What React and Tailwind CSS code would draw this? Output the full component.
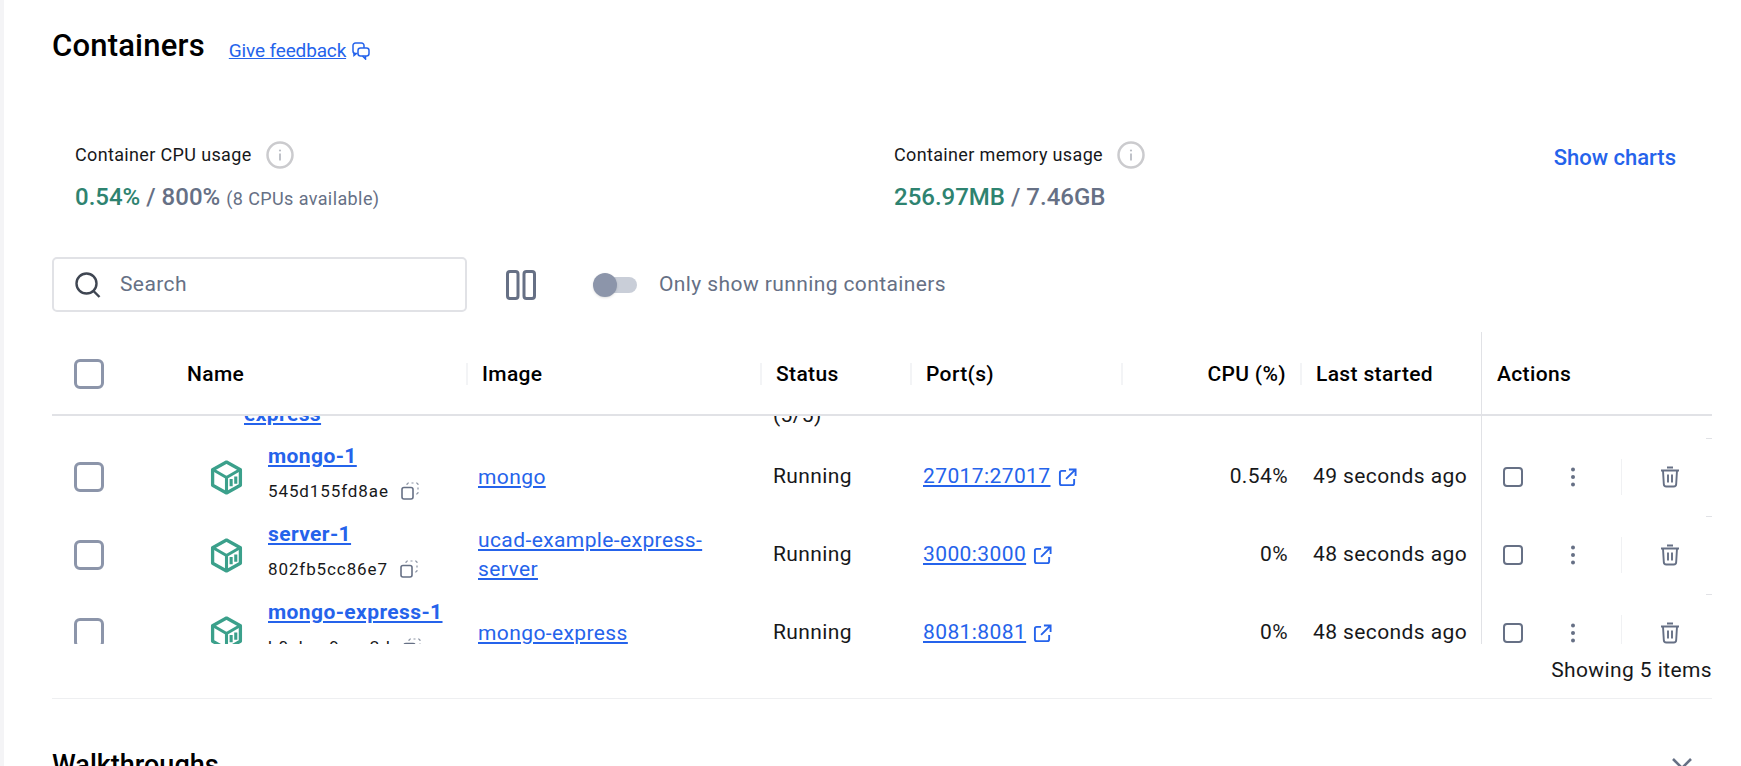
import React from "react";

const cols = "grid grid-cols-[120px_295px_294px_150px_211px_179px_180px_231px]";

const rows = [
  { name: "mongo-1", id: "545d155fd8ae", image: ["mongo"], port: "27017:27017", cpu: "0.54%", ago: "49 seconds ago" },
  { name: "server-1", id: "802fb5cc86e7", image: ["ucad-example-express-", "server"], port: "3000:3000", cpu: "0%", ago: "48 seconds ago" },
  { name: "mongo-express-1", id: "b0cbea9eaa2d", image: ["mongo-express"], port: "8081:8081", cpu: "0%", ago: "48 seconds ago" },
];

function InfoIcon() {
  return (
    <svg width="28" height="28" viewBox="0 0 28 28" fill="none" className="shrink-0">
      <circle cx="14" cy="14" r="12.5" stroke="#cbcbce" strokeWidth="2.5" />
      <circle cx="14" cy="9.5" r="1.1" fill="#b9bcc3" />
      <path d="M14 12.5v7" stroke="#b9bcc3" strokeWidth="1.8" />
    </svg>
  );
}

function FeedbackIcon() {
  return (
    <svg width="18" height="18" viewBox="0 0 18 18" fill="none" stroke="#2563eb" strokeWidth="1.5" className="shrink-0">
      <path d="M5.5 11.5H3.5A2.5 2.5 0 0 1 1 9V3.5A2.5 2.5 0 0 1 3.5 1h6A2.5 2.5 0 0 1 12 3.5V6" />
      <rect x="6" y="6" width="11" height="8" rx="2.5" />
      <path d="M13.5 14v3l-3-3" />
      <path d="M2 11v2.5l2-1.5" />
    </svg>
  );
}

function ContainerIcon() {
  return (
    <svg width="33" height="35" viewBox="0 0 32 34" fill="none" className="shrink-0">
      <path d="M16 2 29.5 9.5v15L16 32 2.5 24.5v-15z" stroke="#3ba08b" strokeWidth="3.2" strokeLinejoin="round" />
      <path d="M3 9.5 16 17l13-7.5M16 17v15" stroke="#3ba08b" strokeWidth="3" strokeLinejoin="round" />
      <path d="M20.5 18.5v7M25 16v7" stroke="#3ba08b" strokeWidth="3" />
    </svg>
  );
}

function CopyIcon() {
  return (
    <svg width="18" height="18" viewBox="0 0 18 18" fill="none" stroke="#667085" className="shrink-0">
      <rect x="1" y="5.5" width="11" height="11.5" rx="2" strokeWidth="1.6" />
      <path d="M6 3V2.5A1.5 1.5 0 0 1 7.5 1H8M10.5 1h2M15 1h.5A1.5 1.5 0 0 1 17 2.5V3M17 5.5v2M17 10v.5a1.5 1.5 0 0 1-1.5 1.5H15" strokeWidth="1.2" opacity="0.75" />
    </svg>
  );
}

function ExternalIcon() {
  return (
    <svg width="19" height="19" viewBox="0 0 20 20" fill="none" stroke="#2563eb" strokeWidth="2" className="shrink-0">
      <path d="M8.5 3H4a2 2 0 0 0-2 2v11a2 2 0 0 0 2 2h11a2 2 0 0 0 2-2v-4.5" />
      <path d="M11.5 1.5h7v7M18.5 1.5 8.5 11.5" />
    </svg>
  );
}

function TrashIcon() {
  return (
    <svg width="20" height="22" viewBox="0 0 20 22" fill="none" stroke="#667085" strokeWidth="1.9" className="shrink-0">
      <path d="M1 4.5h18M7 1.5h6" />
      <path d="M3 4.5 3.8 18a2.5 2.5 0 0 0 2.5 2.5h7.4a2.5 2.5 0 0 0 2.5-2.5L17 4.5" />
      <path d="M8 8.5v8M12 8.5v8" />
    </svg>
  );
}

function Kebab() {
  return (
    <svg width="6" height="20" viewBox="0 0 6 20" fill="#667085" className="shrink-0">
      <circle cx="3" cy="2.5" r="2" />
      <circle cx="3" cy="10" r="2" />
      <circle cx="3" cy="17.5" r="2" />
    </svg>
  );
}

function HeaderCell({ children, sep, right }) {
  return (
    <div className={"relative flex items-center px-[15px] pt-[4px] " + (right ? "justify-end" : "")}>
      {sep && <span className="absolute left-[-1px] top-[31px] h-[22px] w-[2px] bg-[#f3f4f6]" />}
      {children}
    </div>
  );
}

function Row({ row }) {
  return (
    <div className={cols + " relative h-[78px] items-center text-[21px] tracking-[0.4px] text-[#17181a]"}>
      <div className="pl-[22px]">
        <div className="h-[30px] w-[30px] rounded-[6px] border-[3px] border-[#8c95aa]" />
      </div>
      <div className="flex items-center pl-[38px]">
        <ContainerIcon />
        <div className="ml-[25px] pb-[8px]">
          <a className="block font-bold leading-[26px] text-[#2563eb] underline">{row.name}</a>
          <div className="mt-[9px] flex items-center gap-[12px] text-[17px] leading-[26px] tracking-[0.9px]">
            <span>{row.id}</span>
            <CopyIcon />
          </div>
        </div>
      </div>
      <div className="pl-[11px] leading-[29px] text-[#2563eb] underline">
        {row.image.map((line) => (
          <div key={line}>{line}</div>
        ))}
      </div>
      <div className="pl-[12px]">Running</div>
      <div className="flex items-center gap-[7px] pl-[12px]">
        <a className="text-[#2563eb] underline">{row.port}</a>
        <ExternalIcon />
      </div>
      <div className="pr-[13px] text-right">{row.cpu}</div>
      <div className="pl-[12px]">{row.ago}</div>
      <div className="flex h-full items-center border-l border-[#e1e2e6] pl-[21px]">
        <div className="h-[20px] w-[20px] shrink-0 rounded-[4px] border-2 border-[#667085]" />
        <div className="ml-[47px]">
          <Kebab />
        </div>
        <span className="ml-[45px] h-[36px] w-px bg-[#f0f1f3]" />
        <div className="ml-[38px]">
          <TrashIcon />
        </div>
      </div>
      <span className="absolute right-0 top-0 h-px w-[6px] bg-[#e1e2e6]" />
    </div>
  );
}

export default function App() {
  return (
    <div className="h-[766px] w-[1741px] overflow-hidden border-l-4 border-[#f4f4f6] bg-white pl-[48px] pr-[29px] font-['Roboto',sans-serif] text-[#17181a]">
      <div className="flex items-center pt-[28px]">
        <h1 className="text-[31px] font-medium leading-[36px] tracking-[0.2px] text-black">Containers</h1>
        <a className="ml-[24px] mt-[10px] flex items-center gap-[6px] text-[#2563eb]">
          <span className="text-[19px] leading-[26px] tracking-[-0.15px] underline">Give feedback</span>
          <FeedbackIcon />
        </a>
      </div>

      <div className="mt-[77px] flex pl-[23px]">
        <div className="w-[819px]">
          <div className="flex items-center gap-[14px] text-[18px] leading-[28px] tracking-[0.35px]">
            Container CPU usage
            <InfoIcon />
          </div>
          <div className="mt-[10px] flex items-baseline text-[#667085]">
            <span className="text-[24px] font-medium leading-[32px] text-[#2e8370]">0.54%</span>
            <span className="ml-[6px] text-[24px] font-medium">/ 800%</span>
            <span className="ml-[6px] text-[18px] tracking-[0.4px]">(8 CPUs available)</span>
          </div>
        </div>
        <div className="flex-1">
          <div className="flex items-center gap-[14px] text-[18px] leading-[28px] tracking-[0.35px]">
            Container memory usage
            <InfoIcon />
          </div>
          <div className="mt-[10px] flex items-baseline text-[#667085]">
            <span className="text-[24px] font-medium leading-[32px] text-[#2e8370]">256.97MB</span>
            <span className="ml-[6px] text-[24px] font-medium">/ 7.46GB</span>
          </div>
        </div>
        <a className="mt-[3px] pr-[36px] text-[22px] font-medium leading-[28px] text-[#2563eb]">Show charts</a>
      </div>

      <div className="mt-[42px] flex items-center">
        <div className="flex h-[55px] w-[415px] items-center rounded-[5px] border-2 border-[#e1e2e6] pl-[21px]">
          <svg width="26" height="26" viewBox="0 0 26 26" fill="none" stroke="#3f4652" strokeWidth="2.4" className="shrink-0">
            <circle cx="11.5" cy="11.5" r="10" />
            <path d="m18.5 19 6 6" />
          </svg>
          <span className="ml-[19px] text-[21px] tracking-[0.4px] text-[#667085]">Search</span>
        </div>
        <svg width="30" height="30" viewBox="0 0 30 30" fill="none" stroke="#667085" strokeWidth="3" className="ml-[39px] shrink-0">
          <rect x="1.5" y="1.5" width="10.5" height="27" rx="2.5" />
          <rect x="18" y="1.5" width="10.5" height="27" rx="2.5" />
        </svg>
        <div className="relative ml-[58px] h-[16px] w-[43px] rounded-full bg-[#c9ced8]">
          <span className="absolute left-[-1px] top-[-4px] h-[24px] w-[24px] rounded-full bg-[#8c95aa] shadow" />
        </div>
        <span className="ml-[22px] text-[21px] tracking-[0.4px] text-[#667085]">Only show running containers</span>
      </div>

      <div className={cols + " mt-[20px] h-[84px] border-b-2 border-[#e1e2e6] text-[21px] font-medium tracking-[0.35px] text-black"}>
        <div className="flex items-center pl-[22px] pt-[2px]">
          <div className="h-[30px] w-[30px] rounded-[6px] border-[3px] border-[#8c95aa]" />
        </div>
        <HeaderCell>Name</HeaderCell>
        <HeaderCell sep>Image</HeaderCell>
        <HeaderCell sep>Status</HeaderCell>
        <HeaderCell sep>Port(s)</HeaderCell>
        <HeaderCell sep right>CPU (%)</HeaderCell>
        <HeaderCell sep>Last started</HeaderCell>
        <div className="flex items-center border-l border-[#e1e2e6] pl-[15px] pt-[4px]">Actions</div>
      </div>

      <div className="h-[228px] overflow-hidden">
        <div className={cols + " h-[22px] text-[21px] tracking-[0.4px]"}>
          <div />
          <div className="mt-[-15px] pl-[72px] font-bold leading-[26px] text-[#2563eb] underline">express</div>
          <div />
          <div className="mt-[-14px] pl-[12px] leading-[26px]">(5/5)</div>
          <div />
          <div />
          <div />
          <div className="border-l border-[#e1e2e6]" />
        </div>
        {rows.map((row) => (
          <Row key={row.name} row={row} />
        ))}
      </div>

      <div className="flex h-[54px] items-center justify-end text-[21px] tracking-[0.4px]">Showing 5 items</div>
      <div className="h-px bg-[#eeeff1]" />

      <div className="mt-[50px] flex items-center justify-between">
        <h2 className="text-[27px] font-medium leading-[32px] text-black">Walkthroughs</h2>
        <svg width="20" height="20" viewBox="0 0 20 20" fill="none" stroke="#667085" strokeWidth="2.6" className="mr-[20px] mt-[6px]">
          <path d="m1 1 18 18M19 1 1 19" />
        </svg>
      </div>
    </div>
  );
}
